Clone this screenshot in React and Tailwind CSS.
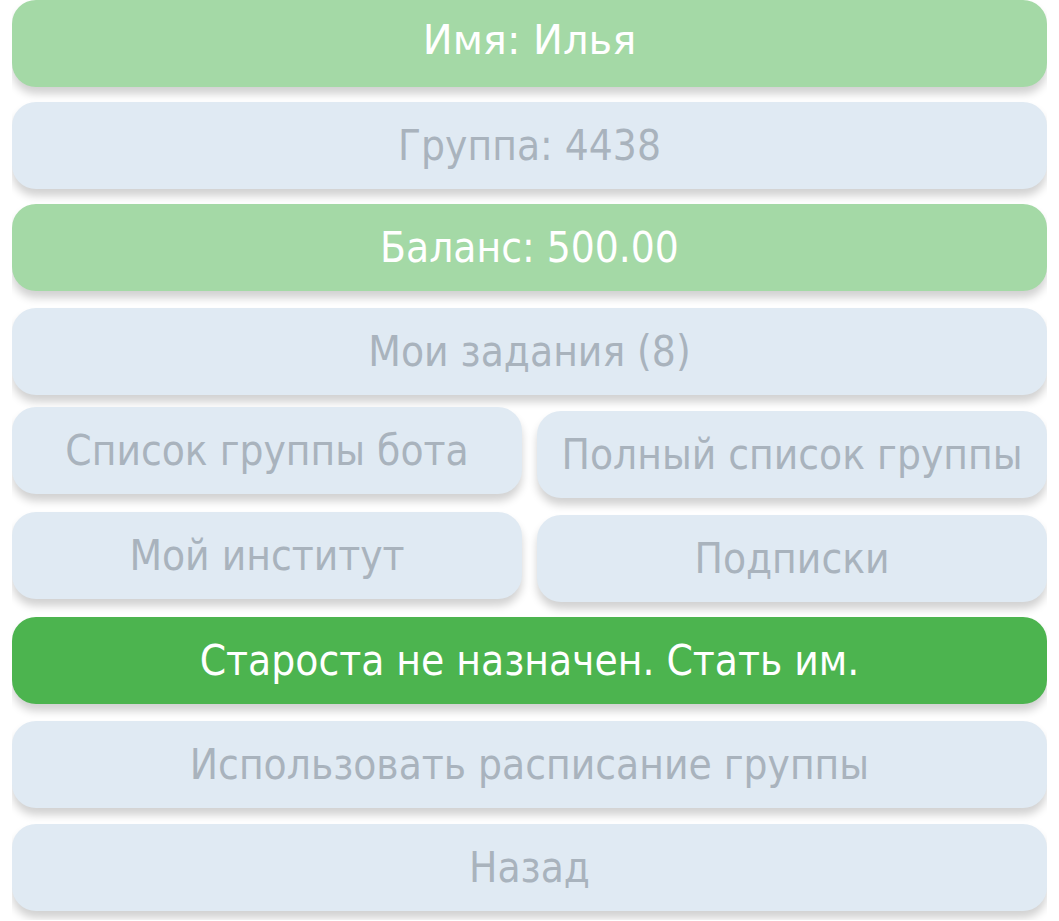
const light = 'bg-[#e0eaf3] text-[#a9b3bd]'
const soft = 'bg-[#a4d9a6] text-white'
const strong = 'bg-[#4cb44f] text-white'

function Key({ tone = light, className = '', children }) {
  return (
    <button
      className={`h-[87px] w-full rounded-[24px] shadow-[0_7px_9px_rgba(0,0,0,0.18)] flex items-center justify-center whitespace-nowrap font-['DejaVu_Sans_Condensed','DejaVu_Sans',sans-serif] text-[42px] leading-none ${tone} ${className}`}
    >
      {children}
    </button>
  )
}

export default function App() {
  return (
    <div className="min-h-[921px] bg-white px-[12px]">
      <div className="overflow-hidden pb-[9px] flex flex-col">
        <Key tone={soft}>
          <span className="font-['DejaVu_Sans',sans-serif] text-[40px] -mt-[8px]">Имя: Илья</span>
        </Key>
        <Key className="mt-[15px]">Группа: 4438</Key>
        <Key tone={soft} className="mt-[15px]">Баланс: 500.00</Key>
        <Key className="mt-[17px]">Мои задания (8)</Key>

        <div className="mt-[12px] grid grid-cols-2 gap-x-[15px] items-start">
          <Key>Список группы бота</Key>
          <Key className="mt-[4px]">Полный список группы</Key>
        </div>
        <div className="mt-[14px] grid grid-cols-2 gap-x-[15px] items-start">
          <Key>Мой институт</Key>
          <Key className="mt-[3px]">Подписки</Key>
        </div>

        <Key tone={strong} className="mt-[15px]">Староста не назначен. Стать им.</Key>
        <Key className="mt-[17px]">Использовать расписание группы</Key>
        <Key className="mt-[16px]">Назад</Key>
      </div>
    </div>
  )
}
